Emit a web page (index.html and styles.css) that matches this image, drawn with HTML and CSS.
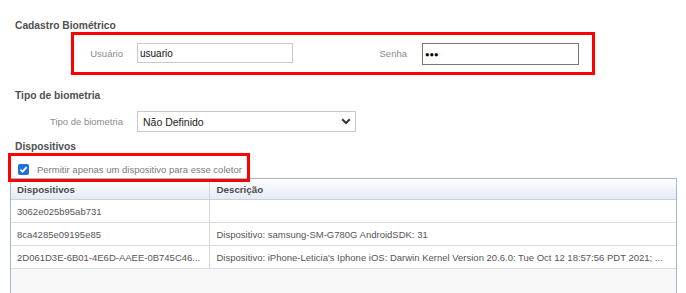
FILE: index.html
```html
<!DOCTYPE html>
<html lang="pt-BR">
<head>
<meta charset="utf-8">
<title>Cadastro Biométrico</title>
<link rel="stylesheet" href="styles.css">
</head>
<body>
<div class="page">
  <h2 class="sec-title t1">Cadastro Biométrico</h2>
  <div class="form-row r1">
    <div class="field">
      <label class="lbl w1">Usuário</label>
      <input class="inp user" type="text" value="usuario">
    </div>
    <div class="field">
      <label class="lbl w2">Senha</label>
      <div class="inp pwd">&#9679;&#9679;&#9679;</div>
    </div>
  </div>

  <h2 class="sec-title t2">Tipo de biometria</h2>
  <div class="form-row r2">
    <div class="field">
      <label class="lbl w1">Tipo de biometria</label>
      <div class="select">
        <span>Não Definido</span>
        <svg class="chev" width="10" height="7" viewBox="0 0 10 7"><path d="M1.2 1.3 L5 5 L8.8 1.3" fill="none" stroke="#333" stroke-width="2"/></svg>
      </div>
    </div>
  </div>

  <h2 class="sec-title t3">Dispositivos</h2>
  <div class="check-row">
    <span class="cb"><svg width="11" height="11" viewBox="0 0 11 11"><path d="M2.4 5.6 L4.5 7.7 L8.7 3.2" fill="none" stroke="#fff" stroke-width="1.7"/></svg></span>
    <span class="cb-text">Permitir apenas um dispositivo para esse coletor</span>
  </div>

  <div class="grid">
    <table>
      <colgroup><col class="c1"><col class="c2"></colgroup>
      <thead>
        <tr><th>Dispositivos</th><th>Descrição</th></tr>
      </thead>
      <tbody>
        <tr><td>3062e025b95ab731</td><td></td></tr>
        <tr><td>8ca4285e09195e85</td><td>Dispositivo: samsung-SM-G780G AndroidSDK: 31</td></tr>
        <tr><td>2D061D3E-6B01-4E6D-AAEE-0B745C46...</td><td>Dispositivo: iPhone-Leticia's Iphone iOS: Darwin Kernel Version 20.6.0: Tue Oct 12 18:57:56 PDT 2021; ...</td></tr>
      </tbody>
    </table>
  </div>

  <div class="mark m1"></div>
  <div class="mark m2"></div>
</div>
</body>
</html>
```

FILE: styles.css
```css
html, body {
  margin: 0;
  padding: 0;
  background: #fff;
  overflow: hidden;
}
body {
  font-family: "Liberation Sans", Arial, sans-serif;
  color: #555;
}
.page {
  position: relative;
  width: 686px;
  height: 293px;
  overflow: hidden;
}
.sec-title {
  margin: 0;
  padding-left: 15px;
  font-size: 10.25px;
  font-weight: bold;
  line-height: 14px;
  color: #505050;
}
.t1 { padding-top: 19px; }
.t2 { margin-top: 25px; }
.t3 { margin-top: 8px; }

.form-row {
  display: flex;
  padding-left: 15px;
}
.r1 { margin-top: 10px; height: 21px; }
.r2 { margin-top: 8px; }

.field {
  display: flex;
  align-items: center;
}
.lbl {
  font-size: 9.5px;
  color: #8a8a8a;
  text-align: right;
}
.w1 { width: 108px; margin-right: 14px; }
.w2 { width: 114px; margin-right: 15px; }

.inp {
  box-sizing: border-box;
  margin: 0;
  font-family: "Liberation Sans", Arial, sans-serif;
  font-size: 10px;
  color: #111;
  background: #fff;
  outline: none;
}
.user {
  width: 156px;
  height: 20px;
  border: 1px solid #c9c9c9;
  padding: 0 2px;
  align-self: flex-start;
}
.pwd {
  width: 157px;
  height: 22px;
  border: 1px solid #767676;
  padding: 0 0 0 2px;
  display: flex;
  align-items: center;
  font-size: 7.5px;
  letter-spacing: 0;
  color: #000;
  align-self: flex-start;
}

.select {
  box-sizing: border-box;
  width: 219px;
  height: 21px;
  border: 1px solid #c9c9c9;
  display: flex;
  align-items: center;
  justify-content: space-between;
  padding: 0 4px 0 5px;
  font-size: 10.5px;
  color: #222;
}
.chev { display: block; }

.check-row {
  display: flex;
  align-items: center;
  height: 24px;
  padding-left: 18px;
  box-sizing: border-box;
  padding-top: 7px;
}
.cb {
  width: 11px;
  height: 11px;
  border-radius: 2px;
  background: #1f6fdc;
  display: flex;
  margin-right: 8px;
}
.cb svg { display: block; }
.cb-text {
  font-size: 9.5px;
  color: #7a7a7a;
}

.grid {
  box-sizing: border-box;
  margin-left: 10px;
  width: 667px;
  height: 130px;
  border: 1px solid #a9b6c8;
  background: #f8f8f8;
}
.grid table {
  width: 100%;
  border-collapse: collapse;
  table-layout: fixed;
}
.c1 { width: 198px; }
.grid th, .grid td {
  white-space: nowrap;
  overflow: hidden;
  text-align: left;
  padding: 0 0 0 6px;
}
.grid th {
  height: 20px;
  font-size: 9.75px;
  font-weight: bold;
  color: #4a4a4a;
  background: linear-gradient(#ffffff, #e4eaf4);
  border-bottom: 1px solid #c9d1dc;
}
.grid th + th, .grid td + td {
  border-left: 1px solid #d4d8de;
  padding-left: 7px;
}
.grid td {
  height: 22px;
  font-size: 9.5px;
  color: #555;
  background: #fff;
  border-bottom: 1px solid #d9dde2;
}

.mark {
  position: absolute;
  box-sizing: border-box;
  border: 3px solid #ff0000;
}
.m1 { left: 71px; top: 32px; width: 524px; height: 43px; }
.m2 { left: 8px; top: 153px; width: 242px; height: 29px; }
```
